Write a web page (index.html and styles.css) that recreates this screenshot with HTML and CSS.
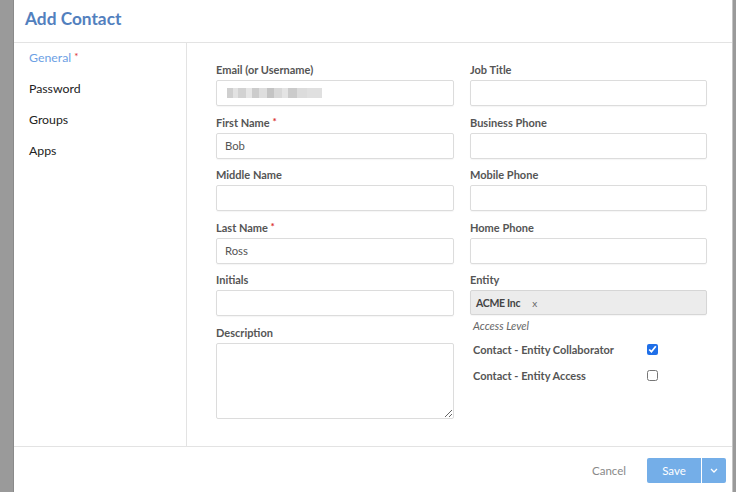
FILE: index.html
```html
<!DOCTYPE html>
<html>
<head>
<meta charset="utf-8">
<link rel="stylesheet" href="styles.css">
</head>
<body>
<div class="backdrop">
  <div class="modal">
    <header class="modal-header"><h1>Add Contact</h1></header>
    <div class="modal-body">
      <nav class="sidebar">
        <a class="nav-item active">General <span class="req">*</span></a>
        <a class="nav-item">Password</a>
        <a class="nav-item">Groups</a>
        <a class="nav-item">Apps</a>
      </nav>
      <div class="form">
        <div class="col">
          <div class="field">
            <label>Email (or Username)</label>
            <div class="input"><span class="blurred"></span></div>
          </div>
          <div class="field">
            <label>First Name <span class="req">*</span></label>
            <div class="input">Bob</div>
          </div>
          <div class="field">
            <label>Middle Name</label>
            <div class="input"></div>
          </div>
          <div class="field">
            <label>Last Name <span class="req">*</span></label>
            <div class="input">Ross</div>
          </div>
          <div class="field">
            <label>Initials</label>
            <div class="input"></div>
          </div>
          <div class="field">
            <label>Description</label>
            <textarea class="textarea"></textarea>
          </div>
        </div>
        <div class="col">
          <div class="field">
            <label>Job Title</label>
            <div class="input"></div>
          </div>
          <div class="field">
            <label>Business Phone</label>
            <div class="input"></div>
          </div>
          <div class="field">
            <label>Mobile Phone</label>
            <div class="input"></div>
          </div>
          <div class="field">
            <label>Home Phone</label>
            <div class="input"></div>
          </div>
          <div class="field entity">
            <label>Entity</label>
            <div class="input tags"><span class="tag">ACME Inc</span><span class="tag-x">x</span></div>
          </div>
          <div class="access">
            <div class="access-title">Access Level</div>
            <div class="check-row"><span>Contact - Entity Collaborator</span><input type="checkbox" checked></div>
            <div class="check-row"><span>Contact - Entity Access</span><input type="checkbox"></div>
          </div>
        </div>
      </div>
    </div>
    <footer class="modal-footer">
      <span class="cancel">Cancel</span>
      <div class="split">
        <span class="btn save">Save</span>
        <span class="btn caret"><svg width="8" height="5" viewBox="0 0 8 5"><path d="M1 1l3 3 3-3" fill="none" stroke="#fff" stroke-width="1.3"/></svg></span>
      </div>
    </footer>
  </div>
</div>
</body>
</html>
```
FILE: styles.css
```css
* { box-sizing: border-box; }
html, body { margin: 0; padding: 0; }
body {
  width: 736px;
  height: 492px;
  overflow: hidden;
  background: #9a9a9a;
  font-family: Lato, "Open Sans", sans-serif;
}
.backdrop {
  display: flex;
  height: 492px;
  padding-left: 13px;
}
.modal {
  width: 720px;
  height: 492px;
  background: #fff;
  display: flex;
  flex-direction: column;
  border-left: 1px solid #8a8a8a;
  border-right: 1px solid #c4c4c4;
}
.modal-header {
  height: 43px;
  border-bottom: 1px solid #e3e3e3;
  padding: 8px 0 0 11px;
}
.modal-header h1 {
  margin: 0;
  font-size: 17.3px;
  line-height: 22px;
  font-weight: 700;
  color: #5280be;
}
.modal-body {
  flex: 1;
  display: flex;
  min-height: 0;
}
.sidebar {
  width: 173px;
  border-right: 1px solid #e3e3e3;
  display: flex;
  flex-direction: column;
}
.nav-item {
  height: 31px;
  line-height: 30px;
  padding-left: 15px;
  font-size: 12.3px;
  color: #222;
}
.nav-item.active { color: #6d9fe4; }
.req { color: #d9312e; font-size: 10px; line-height: 0; vertical-align: 2px; }
.form {
  flex: 1;
  display: flex;
  gap: 16px;
  padding: 20px 24px 0 29px;
}
.col { width: 238px; display: flex; flex-direction: column; }
.col + .col { width: 237px; }
.field { margin-bottom: 9.5px; }
.field label {
  display: block;
  height: 14px;
  font-size: 11px;
  line-height: 14px;
  font-weight: 700;
  color: #555;
  margin-bottom: 3px;
}
.input {
  height: 26px;
  border: 1px solid #dcdcdc;
  border-radius: 2px;
  box-shadow: 0 1px 1px rgba(0,0,0,0.04);
  font-size: 11.3px;
  line-height: 24px;
  color: #555;
  padding: 0 8px;
}
.blurred {
  display: inline-block;
  width: 95px;
  height: 10px;
  margin-top: 7px;
  margin-left: 2px;
  vertical-align: top;
  background: linear-gradient(to right,
    #cfcfcf 0 6%, #e2e2e2 6% 12%, #d2d2d2 12% 20%, #e6e6e6 20% 26%,
    #cccccc 26% 34%, #dedede 34% 42%, #c4c4c4 42% 50%, #d8d8d8 50% 58%,
    #e4e4e4 58% 64%, #cbcbcb 64% 74%, #dcdcdc 74% 84%, #e0e0e0 84% 100%);
  filter: blur(0.6px);
}
.textarea {
  display: block;
  width: 238px;
  height: 76px;
  border: 1px solid #dcdcdc;
  border-radius: 2px;
  resize: both;
  margin: 0;
  font-family: inherit;
}
.tags {
  height: 25px;
  background: #ececec;
  border-color: #d6d6d6;
  padding-left: 5px;
  display: flex;
  align-items: center;
}
.tag { font-size: 10.5px; font-weight: 700; color: #444; letter-spacing: -0.3px; }
.tag-x { font-size: 10px; color: #666; margin-left: 12px; }
.field.entity { margin-bottom: 4px; }
.access { padding-left: 3px; }
.access-title {
  font-size: 11px;
  font-style: italic;
  color: #666;
  line-height: 14px;
  margin-bottom: 9px;
}
.check-row {
  display: flex;
  align-items: center;
  justify-content: space-between;
  width: 185px;
  height: 14px;
  margin-bottom: 12px;
  font-size: 11px;
  font-weight: 700;
  color: #555;
}
.check-row input {
  width: 11px;
  height: 11px;
  margin: 0;
  accent-color: #1f6fe8;
}
.modal-footer {
  height: 46px;
  border-top: 1px solid #e3e3e3;
  display: flex;
  align-items: center;
  justify-content: flex-end;
  padding-right: 6px;
  padding-top: 1px;
}
.cancel {
  font-size: 11.5px;
  color: #888;
  margin-right: 21px;
}
.split { display: flex; gap: 1px; }
.btn {
  height: 25px;
  background: #74aee8;
  color: #fff;
  display: flex;
  align-items: center;
  justify-content: center;
  font-size: 11.5px;
}
.save { width: 54px; border-radius: 2px 0 0 2px; }
.caret { width: 24px; border-radius: 0 2px 2px 0; }
```
